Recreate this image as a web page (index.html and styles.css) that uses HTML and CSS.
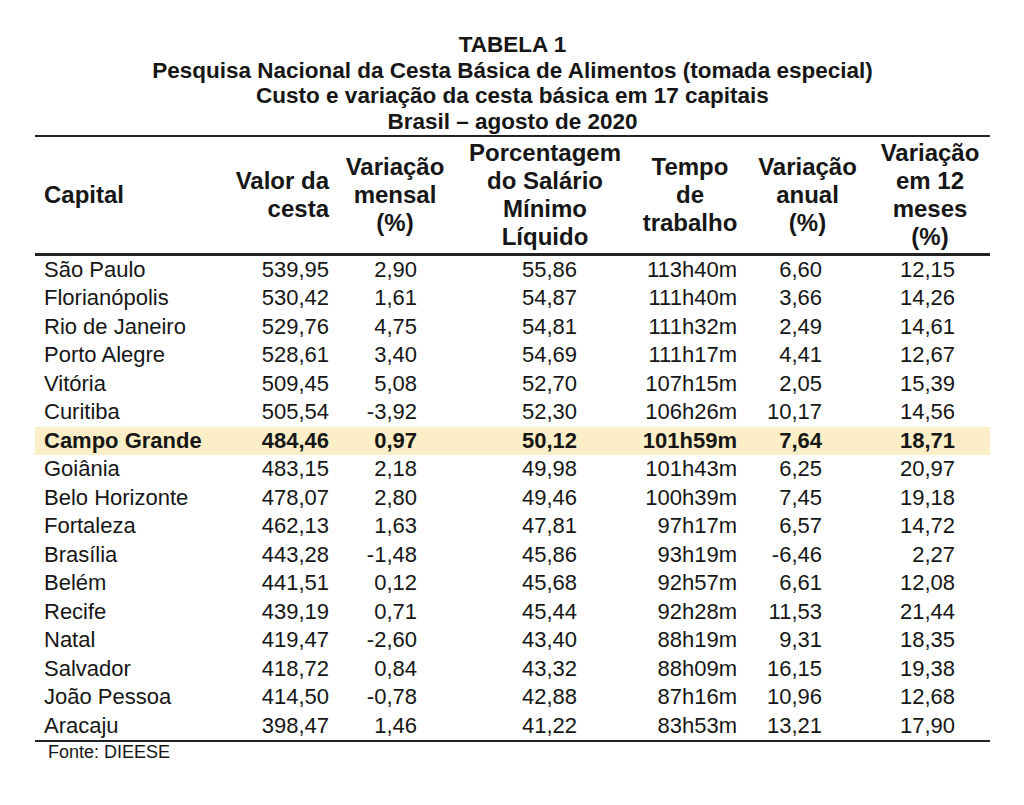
FILE: index.html
```html
<!DOCTYPE html>
<html lang="pt-BR">
<head>
<meta charset="utf-8">
<title>Tabela 1</title>
<link rel="stylesheet" href="styles.css">
</head>
<body>
<div class="page">
  <div class="title">
    <div>TABELA 1</div>
    <div>Pesquisa Nacional da Cesta Básica de Alimentos (tomada especial)</div>
    <div>Custo e variação da cesta básica em 17 capitais</div>
    <div>Brasil – agosto de 2020</div>
  </div>
  <table class="tbl">
    <colgroup>
      <col class="c1"><col class="c2"><col class="c3"><col class="c4"><col class="c5"><col class="c6"><col class="c7">
    </colgroup>
    <thead>
      <tr>
        <th class="h-left">Capital</th>
        <th class="h-right">Valor da<br>cesta</th>
        <th>Variação<br>mensal<br>(%)</th>
        <th>Porcentagem<br>do Salário<br>Mínimo<br>Líquido</th>
        <th>Tempo<br>de<br>trabalho</th>
        <th>Variação<br>anual<br>(%)</th>
        <th>Variação<br>em 12<br>meses<br>(%)</th>
      </tr>
    </thead>
    <tbody>
      <tr><td>São Paulo</td><td>539,95</td><td>2,90</td><td>55,86</td><td>113h40m</td><td>6,60</td><td>12,15</td></tr>
      <tr><td>Florianópolis</td><td>530,42</td><td>1,61</td><td>54,87</td><td>111h40m</td><td>3,66</td><td>14,26</td></tr>
      <tr><td>Rio de Janeiro</td><td>529,76</td><td>4,75</td><td>54,81</td><td>111h32m</td><td>2,49</td><td>14,61</td></tr>
      <tr><td>Porto Alegre</td><td>528,61</td><td>3,40</td><td>54,69</td><td>111h17m</td><td>4,41</td><td>12,67</td></tr>
      <tr><td>Vitória</td><td>509,45</td><td>5,08</td><td>52,70</td><td>107h15m</td><td>2,05</td><td>15,39</td></tr>
      <tr><td>Curitiba</td><td>505,54</td><td>-3,92</td><td>52,30</td><td>106h26m</td><td>10,17</td><td>14,56</td></tr>
      <tr class="hl"><td>Campo Grande</td><td>484,46</td><td>0,97</td><td>50,12</td><td>101h59m</td><td>7,64</td><td>18,71</td></tr>
      <tr><td>Goiânia</td><td>483,15</td><td>2,18</td><td>49,98</td><td>101h43m</td><td>6,25</td><td>20,97</td></tr>
      <tr><td>Belo Horizonte</td><td>478,07</td><td>2,80</td><td>49,46</td><td>100h39m</td><td>7,45</td><td>19,18</td></tr>
      <tr><td>Fortaleza</td><td>462,13</td><td>1,63</td><td>47,81</td><td>97h17m</td><td>6,57</td><td>14,72</td></tr>
      <tr><td>Brasília</td><td>443,28</td><td>-1,48</td><td>45,86</td><td>93h19m</td><td>-6,46</td><td>2,27</td></tr>
      <tr><td>Belém</td><td>441,51</td><td>0,12</td><td>45,68</td><td>92h57m</td><td>6,61</td><td>12,08</td></tr>
      <tr><td>Recife</td><td>439,19</td><td>0,71</td><td>45,44</td><td>92h28m</td><td>11,53</td><td>21,44</td></tr>
      <tr><td>Natal</td><td>419,47</td><td>-2,60</td><td>43,40</td><td>88h19m</td><td>9,31</td><td>18,35</td></tr>
      <tr><td>Salvador</td><td>418,72</td><td>0,84</td><td>43,32</td><td>88h09m</td><td>16,15</td><td>19,38</td></tr>
      <tr><td>João Pessoa</td><td>414,50</td><td>-0,78</td><td>42,88</td><td>87h16m</td><td>10,96</td><td>12,68</td></tr>
      <tr><td>Aracaju</td><td>398,47</td><td>1,46</td><td>41,22</td><td>83h53m</td><td>13,21</td><td>17,90</td></tr>
    </tbody>
  </table>
  <div class="source">Fonte: DIEESE</div>
</div>
</body>
</html>
```
FILE: styles.css
```css
html, body {
  margin: 0;
  padding: 0;
  background: #ffffff;
}
body {
  font-family: "Liberation Sans", Arial, sans-serif;
  color: #161616;
}
.page {
  width: 955px;
  margin-left: 35px;
  padding-top: 32px;
}
.title {
  text-align: center;
  font-weight: bold;
  font-size: 22.5px;
  line-height: 25.7px;
}
.tbl {
  width: 955px;
  border-collapse: collapse;
  table-layout: fixed;
  border-top: 2px solid #222;
  border-bottom: 2px solid #222;
}
.c1 { width: 180px; }
.c2 { width: 120px; }
.c3 { width: 120px; }
.c4 { width: 180px; }
.c5 { width: 110px; }
.c6 { width: 125px; }
.c7 { width: 120px; }
.tbl th {
  font-size: 24px;
  line-height: 28px;
  font-weight: bold;
  padding: 2px 0;
  text-align: center;
  vertical-align: middle;
  border-bottom: 3px solid #222;
}
.tbl th.h-left { text-align: left; padding-left: 9px; }
.tbl th.h-right { text-align: right; padding-right: 6px; }
.tbl td {
  font-size: 22px;
  line-height: 28.5px;
  height: 28.5px;
  padding: 0;
  text-align: right;
  white-space: nowrap;
}
.tbl td:nth-child(1) { text-align: left; padding-left: 9px; }
.tbl td:nth-child(2) { padding-right: 6px; }
.tbl td:nth-child(3) { padding-right: 38px; }
.tbl td:nth-child(4) { padding-right: 58px; }
.tbl td:nth-child(5) { padding-right: 8px; }
.tbl td:nth-child(6) { padding-right: 48px; }
.tbl td:nth-child(7) { padding-right: 35px; }
.tbl tr.hl td {
  background: #fcefc8;
  font-weight: bold;
}
.source {
  font-size: 18px;
  line-height: 20px;
  padding-left: 13px;
}
```
